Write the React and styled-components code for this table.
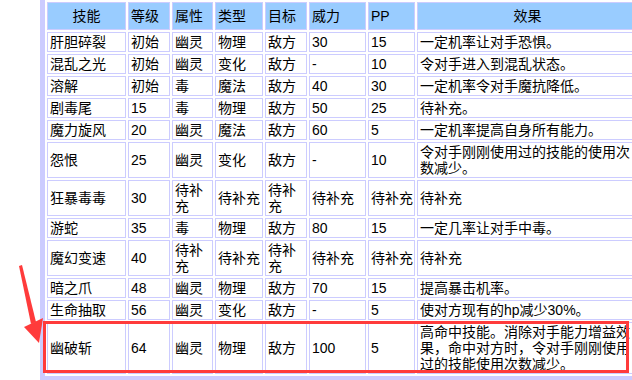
import React from "react";
import styled, { createGlobalStyle } from "styled-components";

const Global = createGlobalStyle`
  html, body {
    margin: 0;
    padding: 0;
    background: #fff;
    overflow: hidden;
  }
  body {
    font-family: "Liberation Sans", "Noto Sans CJK SC", sans-serif;
    font-size: 14px;
    color: #000;
  }
`;

const Page = styled.div`
  position: relative;
  width: 632px;
  height: 380px;
  overflow: hidden;
  padding-left: 40px;
  box-sizing: border-box;
`;

const Table = styled.table`
  table-layout: fixed;
  width: 600px;
  border-collapse: separate;
  border-spacing: 2px;
  border-left: 5px solid #ccccff;
  border-bottom: 10px solid #ccccff;
  border-top: 0;
  border-right: 0;
`;

const Th = styled.th`
  background: #99ccff;
  border: 1px solid #ccccff;
  padding: 5px 2px;
  line-height: 16px;
  font-weight: normal;
  text-align: ${({ $center }) => ($center ? "center" : "left")};
  white-space: nowrap;
  overflow: hidden;
`;

const Td = styled.td`
  border: 1px solid #ccccff;
  padding: 1px 1px 1px 2px;
  line-height: 16px;
  vertical-align: middle;
  word-break: break-all;
`;

const Highlight = styled.div`
  position: absolute;
  left: 43px;
  top: 321px;
  width: 586px;
  height: 52px;
  box-sizing: border-box;
  border: 3px solid #ff3b3b;
  pointer-events: none;
`;

const Arrow = styled.svg`
  position: absolute;
  left: 0;
  top: 258px;
`;

const widths = [79, 42, 41, 48, 42, 57, 47, 221];

const headers = [
  { label: "技能", center: true },
  { label: "等级" },
  { label: "属性" },
  { label: "类型" },
  { label: "目标" },
  { label: "威力" },
  { label: "PP" },
  { label: "效果", center: true },
];

const rows = [
  ["肝胆碎裂", "初始", "幽灵", "物理", "敌方", "30", "15", "一定机率让对手恐惧。"],
  ["混乱之光", "初始", "幽灵", "变化", "敌方", "-", "10", "令对手进入到混乱状态。"],
  ["溶解", "初始", "毒", "魔法", "敌方", "40", "30", "一定机率令对手魔抗降低。"],
  ["剧毒尾", "15", "毒", "物理", "敌方", "50", "25", "待补充。"],
  ["魔力旋风", "20", "幽灵", "魔法", "敌方", "60", "5", "一定机率提高自身所有能力。"],
  ["怨恨", "25", "幽灵", "变化", "敌方", "-", "10", "令对手刚刚使用过的技能的使用次数减少。"],
  ["狂暴毒毒", "30", "待补充", "待补充", "待补充", "待补充", "待补充", "待补充"],
  ["游蛇", "35", "毒", "物理", "敌方", "80", "15", "一定几率让对手中毒。"],
  ["魔幻变速", "40", "待补充", "待补充", "待补充", "待补充", "待补充", "待补充"],
  ["暗之爪", "48", "幽灵", "物理", "敌方", "70", "15", "提高暴击机率。"],
  ["生命抽取", "56", "幽灵", "变化", "敌方", "-", "5", "使对方现有的hp减少30%。"],
  ["幽破斩", "64", "幽灵", "物理", "敌方", "100", "5", "高命中技能。消除对手能力增益效果，命中对方时，令对手刚刚使用过的技能使用次数减少。"],
];

export default function App() {
  return (
    <Page>
      <Global />
      <Table>
        <colgroup>
          {widths.map((w, i) => (
            <col key={i} style={{ width: w }} />
          ))}
        </colgroup>
        <thead>
          <tr>
            {headers.map((h) => (
              <Th key={h.label} $center={h.center}>
                {h.label}
              </Th>
            ))}
          </tr>
        </thead>
        <tbody>
          {rows.map((r) => (
            <tr key={r[0]}>
              {r.map((c, i) => (
                <Td key={i}>{c}</Td>
              ))}
            </tr>
          ))}
        </tbody>
      </Table>
      <Highlight />
      <Arrow width="50" height="90" viewBox="0 258 50 90">
        <polygon points="19,266 22,265 36,322 31,324" fill="#ff3b3b" />
        <polygon points="24,327 43,318 39,343" fill="#ff3b3b" />
      </Arrow>
    </Page>
  );
}
